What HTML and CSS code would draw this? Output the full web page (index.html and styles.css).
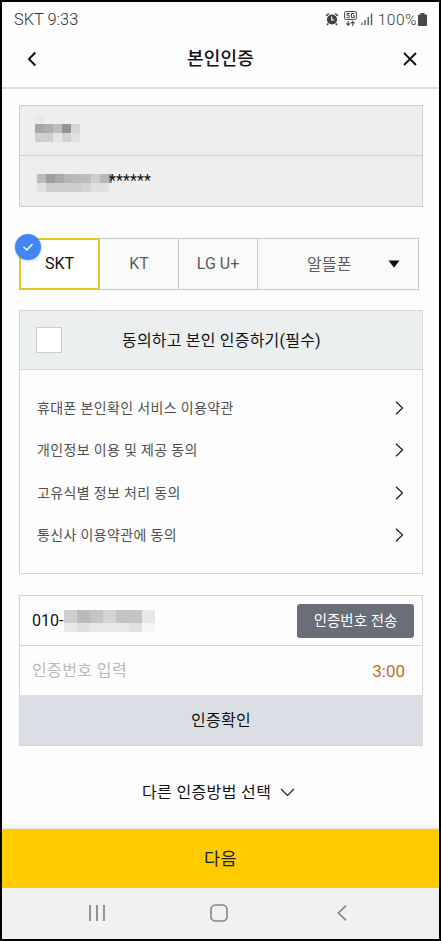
FILE: index.html
```html
<!DOCTYPE html>
<html lang="ko">
<head>
<meta charset="utf-8">
<title>본인인증</title>
<link rel="stylesheet" href="styles.css">
</head>
<body>
<div class="phone">
  <div class="status">
    <span class="carrier">SKT 9:33</span>
    <svg class="alarm" width="14" height="14" viewBox="0 0 14 14"><circle cx="7" cy="7.5" r="5.1" fill="#404040"/><path d="M1 4 3.8 1.5M13 4 10.200 1.500M3.300 11.500 2 13M10.700 11.500 12 13" stroke="#404040" stroke-width="1.500"/><path d="M6.700 4.500V8H9.500" fill="none" stroke="#fff" stroke-width="1.200"/></svg>
    <svg class="fiveg" width="13" height="16" viewBox="0 0 13 16"><rect x=".6" y=".6" width="11.800" height="7.800" rx="1" fill="#fff" stroke="#454545"/><path d="M5.500 2.500H3V4.200H5.200V6.500H2.700M10.500 2.500H7.500V6.500H10.300V4.700H9" fill="none" stroke="#454545"/><path d="M4.200 10V14M2.400 12.300 4.200 14.200 6 12.300M8.800 15V10.700M7 12.400 8.800 10.500 10.600 12.400" fill="none" stroke="#454545" stroke-width="1.100"/></svg>
    <svg class="signal" width="12" height="13" viewBox="0 0 12 13"><path d="M1 9.500V12" stroke="#555" stroke-width="1.200"/><path d="M4 7V12M7.200 4V12M10.500 .5V12" stroke="#555" stroke-width="1.400"/></svg>
    <span class="percent">100%</span>
    <svg width="9" height="13" viewBox="0 0 9 13"><path d="M2.500 0H6.500V1.500H8Q9 1.500 9 2.500V12Q9 13 8 13H1Q0 13 0 12V2.500Q0 1.500 1 1.500H2.500Z" fill="#484848"/></svg>
  </div>
  <header class="header">
    <svg width="10" height="16" viewBox="0 0 10 16"><path d="M8.300 1.500 2 8 8.300 14.500" fill="none" stroke="#111" stroke-width="2"/></svg>
    <h1 class="title">본인인증</h1>
    <svg width="14" height="14" viewBox="0 0 14 14"><path d="M1 1 13 13M13 1 1 13" stroke="#111" stroke-width="1.900"/></svg>
  </header>
  <main class="main">
    <section class="identity">
      <div class="identity-row name">
        <svg width="45" height="27" viewBox="0 0 5 3" shape-rendering="crispEdges"><path fill="#e9e9e9" d="M0 0h1v1H0z"/><path fill="#a7a7a7" d="M0 1h1v1H0z"/><path fill="#afafaf" d="M1 1h1v1H1z"/><path fill="#bebebe" d="M2 1h1v1H2z"/><path fill="#939393" d="M3 1h1v1H3z"/><path fill="#d6d6d6" d="M4 1h1v1H4z"/><path fill="#cfcfcf" d="M0 2h2v1H0z"/><path fill="#e4e4e4" d="M2 2h1v1H2z"/><path fill="#d3d3d3" d="M3 2h1v1H3z"/><path fill="#e1e1e1" d="M4 2h1v1H4z"/></svg>
      </div>
      <div class="identity-row number">
        <svg width="75" height="18" viewBox="0 0 75 18" shape-rendering="crispEdges"><path fill="#bdbdbd" d="M0 0h9v9H0zM45 0h9v9h-9z"/><path fill="#9f9f9f" d="M9 0h9v9H9z"/><path fill="#aaa" d="M18 0h9v9h-9z"/><path fill="#b7b7b7" d="M27 0h9v9h-9zM63 0h9v9h-9z"/><path fill="#bbb" d="M36 0h9v9h-9z"/><path fill="#cecece" d="M54 0h9v9h-9zM9 9h36v9H9z"/><path fill="#e0e0e0" d="M0 9h9v9H0zM54 9h18v9H54z"/><path fill="#d5d5d5" d="M45 9h9v9h-9z"/><path fill="#909090" d="M72 0h3v9h-3z"/></svg><span class="stars">******</span>
      </div>
    </section>
    <section class="carriers">
      <div class="tab active">SKT
        <span class="badge"><svg width="12" height="10" viewBox="0 0 12 10"><path d="M1.500 4.800 4.800 8 10.500 2" fill="none" stroke="#fff" stroke-width="1.400"/></svg></span>
      </div>
      <div class="tab kt">KT</div>
      <div class="tab lg">LG U+</div>
      <div class="tab mvno"><span>알뜰폰</span><svg class="drop" width="12" height="8" viewBox="0 0 12 8"><path d="M.5.5H11.500L6 7.800Z" fill="#111"/></svg></div>
    </section>
    <section class="agree">
      <div class="agree-head"><span class="check"></span><span class="agree-title">동의하고 본인 인증하기(필수)</span></div>
      <div class="terms">
        <div class="term"><span>휴대폰 본인확인 서비스 이용약관</span><svg width="9" height="14" viewBox="0 0 9 14"><path d="M1 .7 7.500 7 1 13.300" fill="none" stroke="#222" stroke-width="1.300"/></svg></div>
        <div class="term"><span>개인정보 이용 및 제공 동의</span><svg width="9" height="14" viewBox="0 0 9 14"><path d="M1 .7 7.500 7 1 13.300" fill="none" stroke="#222" stroke-width="1.300"/></svg></div>
        <div class="term"><span>고유식별 정보 처리 동의</span><svg width="9" height="14" viewBox="0 0 9 14"><path d="M1 .7 7.500 7 1 13.300" fill="none" stroke="#222" stroke-width="1.300"/></svg></div>
        <div class="term"><span>통신사 이용약관에 동의</span><svg width="9" height="14" viewBox="0 0 9 14"><path d="M1 .7 7.500 7 1 13.300" fill="none" stroke="#222" stroke-width="1.300"/></svg></div>
      </div>
    </section>
    <section class="verify">
      <div class="verify-row phone-row"><span class="prefix">010-</span><svg width="91" height="22" viewBox="0 0 91 22" shape-rendering="crispEdges"><path fill="#cecece" d="M0 0h13v13H0z"/><path fill="#bababa" d="M13 0h13v13H13z"/><path fill="#c4c4c4" d="M26 0h13v13H26zM52 0h26v13H52z"/><path fill="#d4d4d4" d="M39 0h13v13H39z"/><path fill="#e8e8e8" d="M78 0h13v13H78zM0 13h13v9H0zM26 13h39v9H26z"/><path fill="#e0e0e0" d="M13 13h13v9H13zM65 13h13v9H65z"/><path fill="#f5f5f5" d="M78 13h13v9H78z"/></svg><button class="send">인증번호 전송</button></div>
      <div class="verify-row code-row"><span class="placeholder">인증번호 입력</span><span class="timer">3:00</span></div>
      <button class="confirm">인증확인</button>
    </section>
    <div class="other"><span>다른 인증방법 선택</span><svg width="15" height="9" viewBox="0 0 15 9"><path d="M1 1 7.500 7.500 14 1" fill="none" stroke="#222" stroke-width="1.200"/></svg></div>
  </main>
  <button class="next">다음</button>
  <nav class="nav">
    <svg width="16" height="16" viewBox="0 0 16 16"><path d="M1 0V16M8 0V16M15 0V16" stroke="#858585" stroke-width="1.700"/></svg>
    <svg class="home" width="18" height="18" viewBox="0 0 18 18"><rect x="1" y="1" width="16" height="16" rx="4.500" fill="none" stroke="#858585" stroke-width="1.600"/></svg>
    <svg width="10" height="16" viewBox="0 0 10 16"><path d="M9 .7 1.500 8 9 15.300" fill="none" stroke="#858585" stroke-width="1.700"/></svg>
  </nav>
</div>
</body>
</html>
```

FILE: styles.css
```css
* { box-sizing: border-box; }
body {
  margin: 0;
  font-family: Roboto, "Noto Sans CJK KR", sans-serif;
  color: #111;
}
button { border: 0; padding: 0; font-family: inherit; color: inherit; }
svg { display: block; flex: none; }
.phone {
  width: 441px;
  height: 941px;
  border: 2px solid #000;
  background: #fefefe;
  display: flex;
  flex-direction: column;
  overflow: hidden;
}
.status {
  height: 34px;
  padding: 0 12px 0 12px;
  display: flex;
  align-items: center;
  font-size: 16px;
  line-height: 20px;
  font-weight: 300;
  color: #333;
  flex: none;
}
.carrier { margin-right: auto; font-size: 16.400px; padding-top: 1px; }
.alarm { margin-right: 5px; }
.fiveg { margin-right: 4px; }
.signal { margin-right: 5px; }
.percent { font-size: 15.500px; letter-spacing: .500px; margin-right: 1px; padding-top: 1px; }
.header {
  height: 53px;
  border-bottom: 2px solid #dcdcdc;
  padding: 0 22px 5px 25px;
  display: flex;
  align-items: center;
  justify-content: space-between;
  flex: none;
}
.title { margin: 0; padding-left: 1px; font-size: 18px; font-weight: 500; line-height: 24px; letter-spacing: .2px; }
.main { flex: 1; padding: 16px 16px 0 17px; }
.identity {
  height: 102px;
  background: #eee;
  border: 1px solid #cfcfcf;
}
.identity-row { height: 50px; display: flex; align-items: flex-start; }
.name { border-bottom: 1px solid #cfcfcf; padding: 9px 0 0 15px; }
.number { padding: 18px 0 0 17px; }
.stars { margin: -3px 0 0 -3px; font-size: 16px; line-height: 20px; letter-spacing: .100px; }
.carriers {
  width: 400px;
  height: 52px;
  margin-top: 31px;
  display: grid;
  grid-template-columns: 81px 79px 79px 161px;
  font-size: 16px;
}
.tab {
  display: flex;
  align-items: center;
  justify-content: center;
  background: #f9fafa;
  border: 1px solid #c6c6c6;
  border-left: 0;
  padding-bottom: 1px;
  color: #5c5c5c;
}
.active {
  position: relative;
  background: #fff;
  border: 2px solid #eac526;
  color: #111;
}
.badge {
  position: absolute;
  left: -6px;
  top: -6px;
  width: 26px;
  height: 26px;
  border-radius: 50%;
  background: #4285f4;
  box-shadow: 0 1px 3px #4285f466;
  display: flex;
  align-items: center;
  justify-content: center;
}
.mvno { justify-content: space-between; padding: 0 18px 1px 49px; }
.mvno span { padding-bottom: 2px; letter-spacing: .200px; }
.agree { margin-top: 20px; height: 264px; border: 1px solid #d6d6d6; }
.agree-head {
  height: 59px;
  display: flex;
  align-items: center;
  background: #ebeff0;
  border-bottom: 1px solid #d6d6d6;
  padding-left: 16px;
}
.check { width: 26px; height: 26px; background: #fff; border: 1px solid #ccc; }
.agree-title { margin-left: 60px; padding-bottom: 2px; font-size: 16px; letter-spacing: .200px; }
.terms { padding: 17px 18px 0 17px; }
.term {
  height: 42.300px;
  display: flex;
  align-items: center;
  justify-content: space-between;
  font-size: 14px;
  letter-spacing: .350px;
  color: #505050;
}
.term span { padding-bottom: 2px; }
.verify { margin-top: 21px; height: 151px; border: 1px solid #d6d6d6; }
.verify-row { display: flex; align-items: center; padding-left: 12px; }
.phone-row { height: 50px; border-bottom: 1px solid #d6d6d6; }
.prefix { font-size: 16px; width: 32px; white-space: nowrap; }
.send {
  margin-left: auto;
  margin-right: 8px;
  width: 117px;
  height: 34px;
  border-radius: 3px;
  background: #696e78;
  color: #fff;
  font-size: 14.500px;
  padding-bottom: 2px;
}
.code-row { height: 49px; justify-content: space-between; padding-right: 17px; }
.placeholder { padding-bottom: 3px; font-size: 16px; letter-spacing: .400px; color: #b9b9b9; }
.timer { font-size: 17px; color: #c46a1b; }
.confirm { display: block; width: 100%; height: 50px; padding-bottom: 2px; background: #dcdee6; font-size: 16px; letter-spacing: .300px; }
.other {
  margin-top: 34px;
  padding-left: 123px;
  height: 24px;
  display: flex;
  align-items: center;
  gap: 9px;
  font-size: 16px;
  letter-spacing: .350px;
}
.other span { padding-bottom: 2px; }
.next {
  height: 59px;
  flex: none;
  background: #fc0;
  color: #222;
  font-size: 17.500px;
  letter-spacing: .500px;
  padding-bottom: 2px;
  box-shadow: 0 -1px 4px #0002;
}
.nav {
  height: 51px;
  flex: none;
  background: #f1f1f1;
  display: flex;
  align-items: center;
  justify-content: space-between;
  padding: 0 92px 1px 87px;
}
.home { margin-right: 4px; }
```
